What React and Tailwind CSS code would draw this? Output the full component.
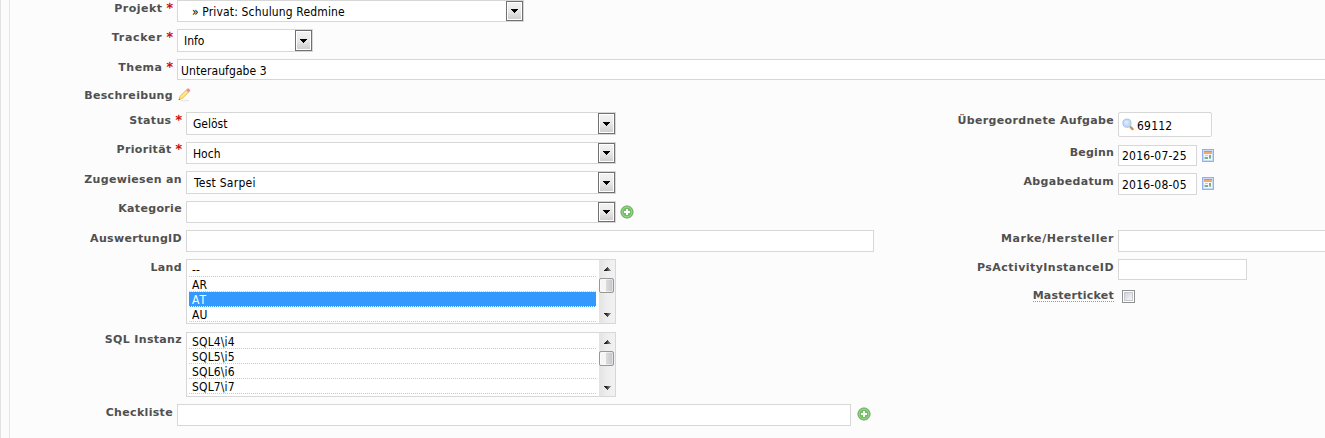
const Row = ({ label, required, height, labelWidth, labelClass = 'mt-[2px]', tracking = 'tracking-[0.33px]', hint, children }) => (
  <div className={`flex shrink-0 items-start gap-1 ${height}`}>
    <div className={`${labelWidth} ${labelClass} flex shrink-0 justify-end text-[11px] leading-[14px] font-bold whitespace-pre text-[#505050]`}>
      <span className={`${tracking} ${hint ? 'h-[13px] border-b border-dotted border-[#999] leading-[14px]' : ''}`}>{label}</span>
      {required && <span className="pl-[4px] text-[13px] leading-[12px] font-normal text-[#cc0000] [-webkit-text-stroke:0.3px_#cc0000]">*</span>}
    </div>
    {children}
  </div>
);

const valueFont = "font-['DejaVu_Sans_Condensed','DejaVu_Sans',sans-serif] text-[12px] leading-[15px] whitespace-pre text-black";

const Select = ({ size, pad = 'pl-[6px]', textClass = 'pt-1', children }) => (
  <div className={`flex shrink-0 justify-between border border-[#d7d7d7] bg-white ${size}`}>
    <span className={`${valueFont} ${pad} ${textClass}`}>{children}</span>
    <span className="flex w-[17px] shrink-0 items-stretch border border-[#707070] bg-white p-px">
      <span className="flex flex-1 items-center justify-center bg-linear-to-b from-[#f2f2f2] from-0% via-[#e8e8e8] via-50% to-[#cfcfcf]">
        <svg width="7" height="4" viewBox="0 0 7 4" shapeRendering="crispEdges"><path d="M0 0h7v1H6v1H5v1H4v1H3V3H2V2H1V1H0z" /></svg>
      </span>
    </span>
  </div>
);

const Input = ({ size, children, textClass = 'pl-[3px] pt-[3px]' }) => (
  <div className={`shrink-0 border border-[#d7d7d7] bg-white ${size}`}>
    <div className={`${valueFont} ${textClass}`}>{children}</div>
  </div>
);

const Arrow = ({ up }) => (
  <svg width="7" height="4" viewBox="0 0 7 4" shapeRendering="crispEdges">
    <defs>
      <linearGradient id="arrow"><stop offset=".3" stopColor="#222" /><stop offset="1" stopColor="#aaa" /></linearGradient>
    </defs>
    <path fill="url(#arrow)" d={up ? 'M0 4V3h1V2h1V1h1V0h1v1h1v1h1v1h1v1z' : 'M0 0h7v1H6v1H5v1H4v1H3V3H2V2H1V1H0z'} />
  </svg>
);

const ListBox = ({ items, selected, first }) => (
  <div className="flex h-[65px] w-[430px] shrink-0 border border-[#d7d7d7] bg-white">
    <div className={`flex-1 overflow-hidden pl-[2px] pr-[3px] ${first}`}>
      {items.map((t) => (
        <div
          key={t}
          className={`h-[15px] border-b border-dotted pl-[3px] font-['DejaVu_Sans_Condensed','DejaVu_Sans',sans-serif] text-[12px] leading-[16px] ${
            t === selected ? 'border-white bg-[#3399ff] tracking-[1px] text-white' : 'border-[#c8c8c8] tracking-[0.15px] text-black'
          }`}
        >
          {t}
        </div>
      ))}
    </div>
    <div className="flex w-[16px] flex-col items-center bg-linear-to-r from-[#e3e3e3] via-[#eeeeee] to-[#f1f1f1]">
      <div className="flex h-[18px] items-center"><Arrow up /></div>
      <div className="h-[15px] w-[15px] self-start rounded-[2px] border border-[#979797] bg-linear-to-r from-[#f5f5f5] from-45% via-[#d9dadc] via-50% to-[#c4c5ca] shadow-[inset_0_0_0_1px_#ffffff80]" />
      <div className="flex flex-1 items-end pb-[6px]"><Arrow /></div>
    </div>
  </div>
);

const Plus = ({ place }) => (
  <svg className={`shrink-0 ${place}`} width="14" height="14" viewBox="0 0 14 14">
    <circle cx="7" cy="7" r="6.1" fill="#72bd62" stroke="#5ba552" strokeWidth=".9" />
    <circle cx="7" cy="7" r="4.9" fill="none" stroke="#b0dca4" strokeWidth=".8" />
    <path d="M7 4v6M4 7h6" stroke="#fff" strokeWidth="2" />
  </svg>
);

const Pencil = () => (
  <svg className="shrink-0" width="16" height="14" viewBox="0 0 16 14">
    <path d="M4 12.6h8" stroke="#e8e8e8" strokeWidth="1.4" />
    <path d="M3 8 9 2l2.5 2.5-5.9 5.9-3.6 1.3z" fill="#f8dc70" stroke="#e2ba58" strokeWidth=".6" />
    <path d="m4.3 9.1 5.6-5.6" stroke="#fff3b8" strokeWidth="1" />
    <path d="m9 2 1.4-1.4h1.4L13.2 2v1.1l-1.6 1.5z" fill="#f08c98" />
    <path d="m1.5 12.2.7-1.9 1.2 1.2z" fill="#777" />
  </svg>
);

const Magnifier = () => (
  <svg className="shrink-0" width="13" height="13" viewBox="0 0 13 13">
    <path d="m8.6 9.2 2 1.9" stroke="#cd9158" strokeWidth="2.4" strokeLinecap="round" />
    <circle cx="5" cy="5.2" r="4.1" fill="#c2dcf7" stroke="#a5c3ea" />
    <circle cx="4.4" cy="4.4" r="2" fill="#d8eafb" />
  </svg>
);

const Calendar = () => (
  <svg className="mt-1 ml-px shrink-0" width="12" height="13" viewBox="0 0 12 13" shapeRendering="crispEdges">
    <path fill="#8fb2ea" d="M0 0h12v13H0z" />
    <path fill="#c9dcf7" d="M1 1h10v11H1z" />
    <path fill="#f3f7fc" d="M2 5h8v6H2z" />
    <path fill="#f0874a" d="M2 2h8v1H2z" />
    <path fill="#f7a66f" d="M2 3h8v2H2z" />
    <path fill="#bccbe0" d="M3 6h3v1H3zM2 8h1v2H2z" />
    <path fill="#74b868" d="M7 6h2v3H7zM3 8h3v2H3z" />
    <path fill="#a9c6c4" d="M7 9h2v1H7z" />
  </svg>
);

const TOP = 'w-[163px]';
const LEFT = 'w-[172px]';
const RIGHT = 'w-[234px]';

export default function App() {
  return (
    <div className="h-[438px] w-[1325px] overflow-hidden border-l border-[#e2e2e2] bg-[#fcfcfc] pl-2 font-['DejaVu_Sans',sans-serif]">
      <form className="flex h-full flex-col border-l border-[#e4e4e4]">
        <Row label="Projekt" required tracking="tracking-[0.5px]" height="h-[29px]" labelWidth={TOP}>
          <Select size="h-[22px] w-[347px]" pad="pl-[14px] tracking-[0.15px]">» Privat: Schulung Redmine</Select>
        </Row>
        <Row label="Tracker" required tracking="tracking-[0.75px]" height="h-[30px]" labelWidth={TOP}>
          <Select size="h-[23px] w-[136px]">Info</Select>
        </Row>
        <Row label="Thema" required tracking="tracking-[0.5px]" height="h-[29px]" labelWidth={TOP}>
          <Input size="h-[21px] w-[1200px]" textClass="pl-[3px] pt-[4px] tracking-[0.08px]">Unteraufgabe 3</Input>
        </Row>
        <Row label="Beschreibung" height="h-[24px]" labelWidth={TOP} labelClass="mt-px">
          <Pencil />
        </Row>

        <div className="flex h-[292px] shrink-0">
          <div className="flex w-[870px] shrink-0 flex-col">
            <Row label="Status" required height="h-[30px]" labelWidth={LEFT}>
              <Select size="h-[23px] w-[430px]">Gelöst</Select>
            </Row>
            <Row label="Priorität" required height="h-[29px]" labelWidth={LEFT} labelClass="mt-px">
              <Select size="h-[22px] w-[430px]">Hoch</Select>
            </Row>
            <Row label="Zugewiesen an" height="h-[30px]" labelWidth={LEFT}>
              <Select size="h-[23px] w-[430px]" pad="pl-[7px] tracking-[0.25px]">Test Sarpei</Select>
            </Row>
            <Row label="Kategorie" height="h-[29px]" labelWidth={LEFT} labelClass="mt-px">
              <Select size="h-[22px] w-[430px]" />
              <Plus place="mt-1" />
            </Row>
            <Row label="AuswertungID" height="h-[29px]" labelWidth={LEFT}>
              <Input size="h-[22px] w-[688px]" />
            </Row>
            <Row label="Land" height="h-[73px]" labelWidth={LEFT}>
              <ListBox first="pt-[2px]" items={['--', 'AR', 'AT', 'AU']} selected="AT" />
            </Row>
            <Row label="SQL Instanz" height="h-[72px]" labelWidth={LEFT} labelClass="mt-px">
              <ListBox first="pt-[1px]" items={['SQL4\\i4', 'SQL5\\i5', 'SQL6\\i6', 'SQL7\\i7']} />
            </Row>
          </div>

          <div className="flex shrink-0 flex-col">
            <Row label="Übergeordnete Aufgabe" height="h-[33px]" labelWidth={RIGHT}>
              <div className="flex h-[25px] w-[94px] shrink-0 items-center gap-[2px] rounded-[2px] border border-[#d7d7d7] bg-white pl-[3px]">
                <Magnifier />
                <span className={`${valueFont} pt-[3px] tracking-[0.2px]`}>69112</span>
              </div>
            </Row>
            <Row label="Beginn" tracking="tracking-[0.2px]" height="h-[28px]" labelWidth={RIGHT} labelClass="mt-px">
              <Input size="h-[21px] w-[79px]" textClass="pl-[3px] pt-[3px] tracking-[0.2px]">2016-07-25</Input>
              <Calendar />
            </Row>
            <Row label="Abgabedatum" height="h-[57px]" labelWidth={RIGHT}>
              <Input size="h-[22px] w-[79px]" textClass="pl-[3px] pt-[4px] tracking-[0.2px]">2016-08-05</Input>
              <Calendar />
            </Row>
            <Row label="Marke/Hersteller" tracking="tracking-[0.55px]" height="h-[29px]" labelWidth={RIGHT}>
              <Input size="h-[22px] w-[300px]" />
            </Row>
            <Row label="PsActivityInstanceID" tracking="tracking-[0.45px]" height="h-[29px]" labelWidth={RIGHT}>
              <Input size="h-[21px] w-[129px]" />
            </Row>
            <Row label="Masterticket" tracking="tracking-[0.25px]" hint height="h-[29px]" labelWidth={RIGHT} labelClass="mt-px">
              <span className="mt-[2px] ml-1 h-[13px] w-[13px] border border-[#8e8f8f] bg-white p-px">
                <span className="block h-full w-full border border-[#c4c8cf] bg-linear-to-br from-[#cfd3db] to-[#f6f6f6]" />
              </span>
            </Row>
          </div>
        </div>

        <Row label="Checkliste" height="h-[34px]" labelWidth={TOP}>
          <Input size="h-[22px] w-[674px]" />
          <Plus place="mt-[3px] ml-[2px]" />
        </Row>
      </form>
    </div>
  );
}
